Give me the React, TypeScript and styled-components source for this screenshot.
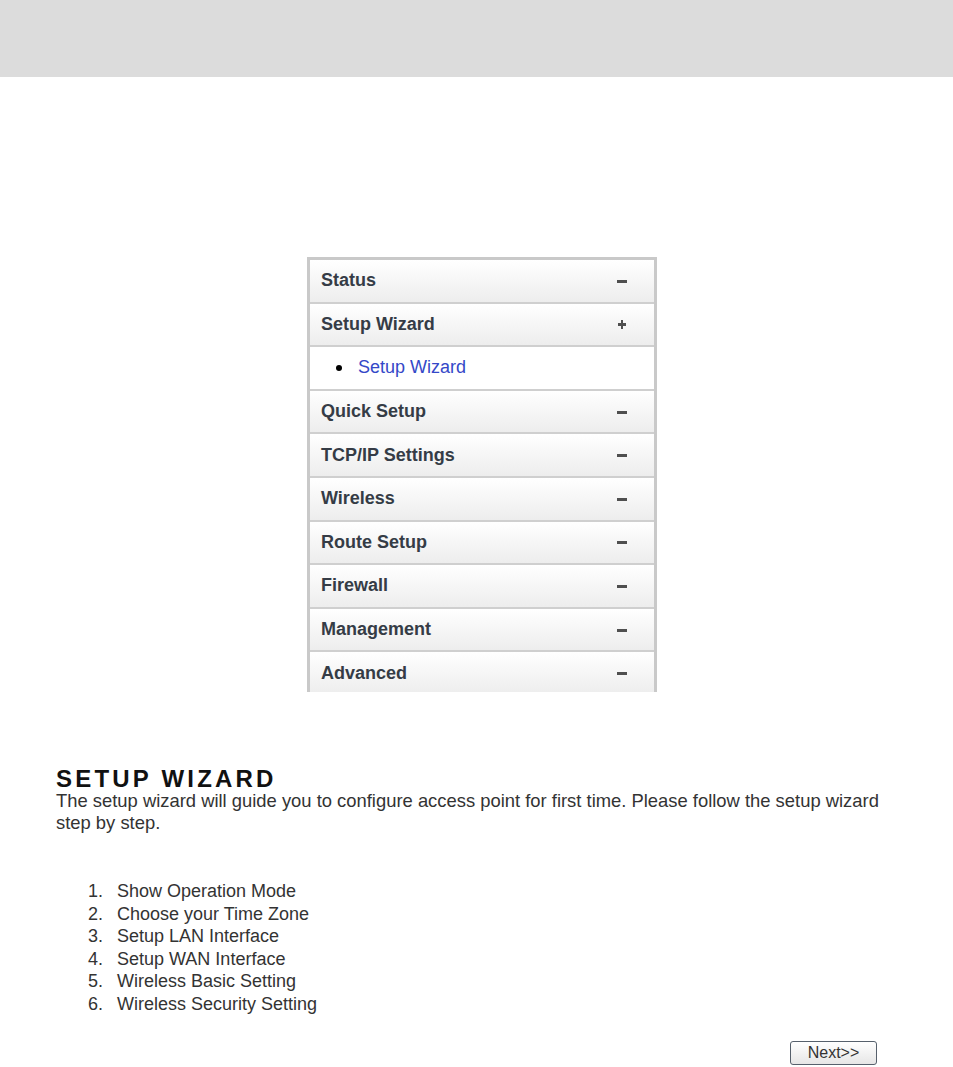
import React from "react";
import styled, { createGlobalStyle } from "styled-components";

const Global = createGlobalStyle`
  html, body { margin: 0; padding: 0; background: #ffffff; }
  body { font-family: "Liberation Sans", Arial, sans-serif; color: #333333; }
`;

const Page = styled.div`
  width: 953px;
  height: 1067px;
  overflow: hidden;
  display: flex;
  flex-direction: column;
`;

const TopBar = styled.div`
  height: 77px;
  background: #dcdcdc;
  flex: none;
`;

const Menu = styled.nav`
  margin: 180px 0 0 307px;
  width: 350px;
  height: 435px;
  box-sizing: border-box;
  border: 3px solid #c9c9c9;
  border-bottom: none;
  overflow: hidden;
  flex: none;
  display: flex;
  flex-direction: column;
`;

const MenuHead = styled.div`
  height: 43.6px;
  flex: none;
  box-sizing: border-box;
  border-bottom: 2px solid #cfcfcf;
  background: linear-gradient(#ffffff, #ededed);
  display: flex;
  align-items: center;
  justify-content: space-between;
  padding: 0 27px 0 11px;
  font-weight: bold;
  font-size: 18px;
  color: #353c46;
`;

const Sign = styled.span<{ $open?: boolean }>`
  position: relative;
  width: 10px;
  height: 10px;
  flex: none;
  &::before {
    content: "";
    position: absolute;
    left: ${(p) => (p.$open ? "1px" : "0")};
    right: ${(p) => (p.$open ? "1px" : "0")};
    top: 4px;
    height: ${(p) => (p.$open ? "2.5px" : "3px")};
    background: #4f4f4f;
  }
  &::after {
    content: "";
    display: ${(p) => (p.$open ? "block" : "none")};
    position: absolute;
    left: 3.75px;
    top: 1px;
    width: 2.5px;
    height: 8.5px;
    background: #4f4f4f;
  }
`;

const SubItem = styled.div`
  height: 43.6px;
  flex: none;
  box-sizing: border-box;
  border-bottom: 2px solid #cfcfcf;
  background: #ffffff;
  display: flex;
  align-items: center;
  padding-left: 26px;
  font-size: 18px;
  color: #3448c8;
`;

const Bullet = styled.span`
  width: 6px;
  height: 6px;
  border-radius: 50%;
  background: #000;
  margin-right: 16px;
`;

const Content = styled.section`
  margin: 76px 0 0 56px;
  width: 840px;
`;

const Title = styled.h1`
  margin: 0;
  font-size: 24px;
  line-height: 22px;
  font-weight: bold;
  letter-spacing: 3.2px;
  color: #111;
`;

const Intro = styled.p`
  margin: 0;
  font-size: 18.4px;
  line-height: 22px;
  color: #333;
`;

const Steps = styled.ol`
  list-style: none;
  margin: 46px 0 0;
  padding: 0 0 0 32px;
`;

const Step = styled.li`
  display: flex;
  font-size: 18px;
  line-height: 22.6px;
  color: #333;
`;

const Num = styled.span`
  width: 29px;
  flex: none;
`;

const Actions = styled.div`
  display: flex;
  justify-content: flex-end;
  padding-right: 19px;
  margin-top: 25px;
`;

const Button = styled.button`
  width: 87px;
  height: 24px;
  box-sizing: border-box;
  border: 1px solid #56606c;
  border-radius: 3px;
  background: linear-gradient(#ffffff, #e6e6e6);
  font-family: "Liberation Sans", Arial, sans-serif;
  font-size: 16px;
  color: #333;
  padding: 0;
`;

const heads = [
  "Quick Setup",
  "TCP/IP Settings",
  "Wireless",
  "Route Setup",
  "Firewall",
  "Management",
  "Advanced",
];

const steps = [
  "Show Operation Mode",
  "Choose your Time Zone",
  "Setup LAN Interface",
  "Setup WAN Interface",
  "Wireless Basic Setting",
  "Wireless Security Setting",
];

export default function App() {
  return (
    <Page>
      <Global />
      <TopBar />
      <Menu>
        <MenuHead>
          <span>Status</span>
          <Sign aria-label="collapse" />
        </MenuHead>
        <MenuHead>
          <span>Setup Wizard</span>
          <Sign $open aria-label="expand" />
        </MenuHead>
        <SubItem>
          <Bullet />
          Setup Wizard
        </SubItem>
        {heads.map((h) => (
          <MenuHead key={h}>
            <span>{h}</span>
            <Sign aria-label="collapse" />
          </MenuHead>
        ))}
      </Menu>
      <Content>
        <Title>SETUP WIZARD</Title>
        <Intro>
          The setup wizard will guide you to configure access point for first time. Please follow the setup wizard step by step.
        </Intro>
        <Steps>
          {steps.map((s, i) => (
            <Step key={s}>
              <Num>{i + 1}.</Num>
              <span>{s}</span>
            </Step>
          ))}
        </Steps>
        <Actions>
          <Button>Next&gt;&gt;</Button>
        </Actions>
      </Content>
    </Page>
  );
}
